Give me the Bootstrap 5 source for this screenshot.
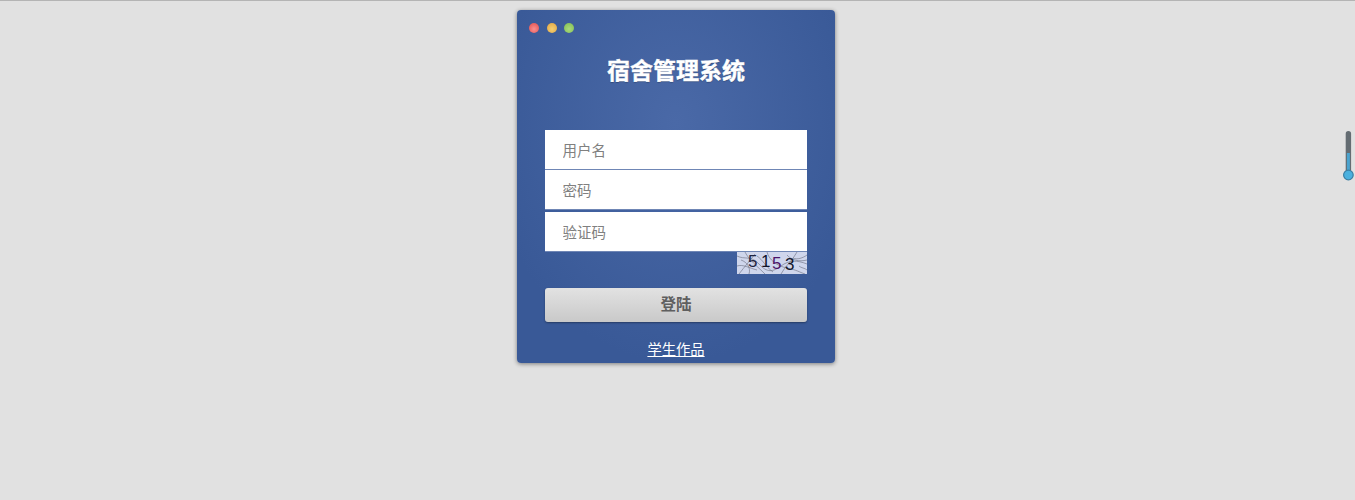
<!DOCTYPE html>
<html lang="zh-CN">
<head>
<meta charset="utf-8">
<title>宿舍管理系统</title>
<link href="https://cdn.jsdelivr.net/npm/bootstrap@5.3.0/dist/css/bootstrap.min.css" rel="stylesheet">
<style>
html,body{height:100%;overflow:hidden}
body{background:#e1e1e1;border-top:1px solid #b4b4b4;font-family:"Liberation Sans","Noto Sans CJK SC",sans-serif;position:relative;padding-right:3px}
.login-box{width:318px;height:353px;margin:9px auto 0;border-radius:4px;background:radial-gradient(ellipse 190px 240px at 50% 32%,#4a69a7 0%,#395997 100%);box-shadow:0 1px 4px rgba(0,0,0,.45);padding:12px 28px 0;color:#fff}
.lights{gap:7.5px;margin-left:-16px;height:12px}
.light{width:10px;height:10px;border-radius:50%;filter:blur(.7px)}
.l-red{background:radial-gradient(circle at 50% 60%,#fa9090 0%,#e8605f 70%,#c55 100%)}
.l-amber{background:radial-gradient(circle at 50% 60%,#f5cf70 0%,#e6b04f 70%,#c9963f 100%)}
.l-green{background:radial-gradient(circle at 50% 60%,#aadb7c 0%,#8cc55d 70%,#6fa549 100%)}
.sys-title{font-size:23px;font-weight:700;line-height:30px;margin:22px 0 44px;text-align:center;text-shadow:0 1px 1px rgba(0,0,0,.25);color:#fff;-webkit-text-stroke:.4px #fff}
.field{display:block;width:100%;height:40px;border:0;border-radius:0;border-bottom:1px solid #6f86b5;background:#fff;padding:2px 17.5px 0;font-size:14.5px;color:#333;box-shadow:none}
.field::placeholder{color:#808080;opacity:1}
.field-gap{margin-bottom:2px}
.captcha-img{width:70px;height:22px;display:block;background:#cfd6ec}
.captcha-row{height:22px}
.login-btn{display:block;width:100%;height:34px;margin-top:14px;padding:0;background:linear-gradient(#e2e2e2,#c9c9c9);border:0;border-radius:3px;color:#5f5f5f;font-size:15.5px;font-weight:700;box-shadow:0 1px 2px rgba(0,0,0,.35)}
.credit{margin-top:19px;line-height:18px;font-size:14.3px;text-align:center}
.credit a{color:#fff}
.thermo{position:absolute;left:1342px;top:130px;width:13px;height:50px}
</style>
</head>
<body>
<div class="login-box">
  <div class="lights d-flex align-items-center">
    <span class="light l-red"></span><span class="light l-amber"></span><span class="light l-green"></span>
  </div>
  <h1 class="sys-title">宿舍管理系统</h1>
  <form>
    <input class="field" type="text" placeholder="用户名">
    <input class="field field-gap" type="password" placeholder="密码">
    <input class="field" type="text" placeholder="验证码">
    <div class="captcha-row d-flex justify-content-end">
      <svg class="captcha-img" viewBox="0 0 70 22" role="img" aria-label="验证码图片">
        <g fill="none" stroke="#6a6d7e" stroke-width=".6">
          <path d="M0 4C8 8 14 3 22 12S36 20 44 14 60 8 70 12"/>
          <path d="M2 22C8 14 12 10 18 2M8 0C12 8 20 14 28 22M30 0C32 8 40 14 50 16S62 20 68 22"/>
          <path d="M44 22C48 14 56 8 60 0M56 6C60 8 66 6 70 3M0 14C6 12 12 16 20 18M62 14C64 16 68 16 70 18"/>
          <path d="M4 8C10 10 14 16 12 22M20 4C26 8 28 14 36 20M50 3C54 8 62 10 70 8"/>
        </g>
        <g font-family="'Liberation Sans',sans-serif" font-size="17">
          <text x="11" y="15" fill="#1d2440">5</text>
          <text x="24" y="15" fill="#10142a">1</text>
          <text x="35" y="17" fill="#4b1368">5</text>
          <text x="48" y="18" fill="#10142a">3</text>
        </g>
      </svg>
    </div>
    <button class="login-btn" type="button">登陆</button>
  </form>
  <div class="credit"><a href="#">学生作品</a></div>
</div>
<svg class="thermo" viewBox="0 0 13 50" aria-hidden="true">
  <rect x="3.7" y="0" width="5.4" height="42" rx="2.7" fill="#646c72"/>
  <rect x="4.9" y="22" width="3" height="22" fill="#4aa3cf"/>
  <circle cx="6.4" cy="44" r="4.8" fill="#4ab0de" stroke="#3a7ea3" stroke-width="1.2"/>
</svg>
<script src="https://cdn.jsdelivr.net/npm/bootstrap@5.3.0/dist/js/bootstrap.bundle.min.js"></script>
</body>
</html>
